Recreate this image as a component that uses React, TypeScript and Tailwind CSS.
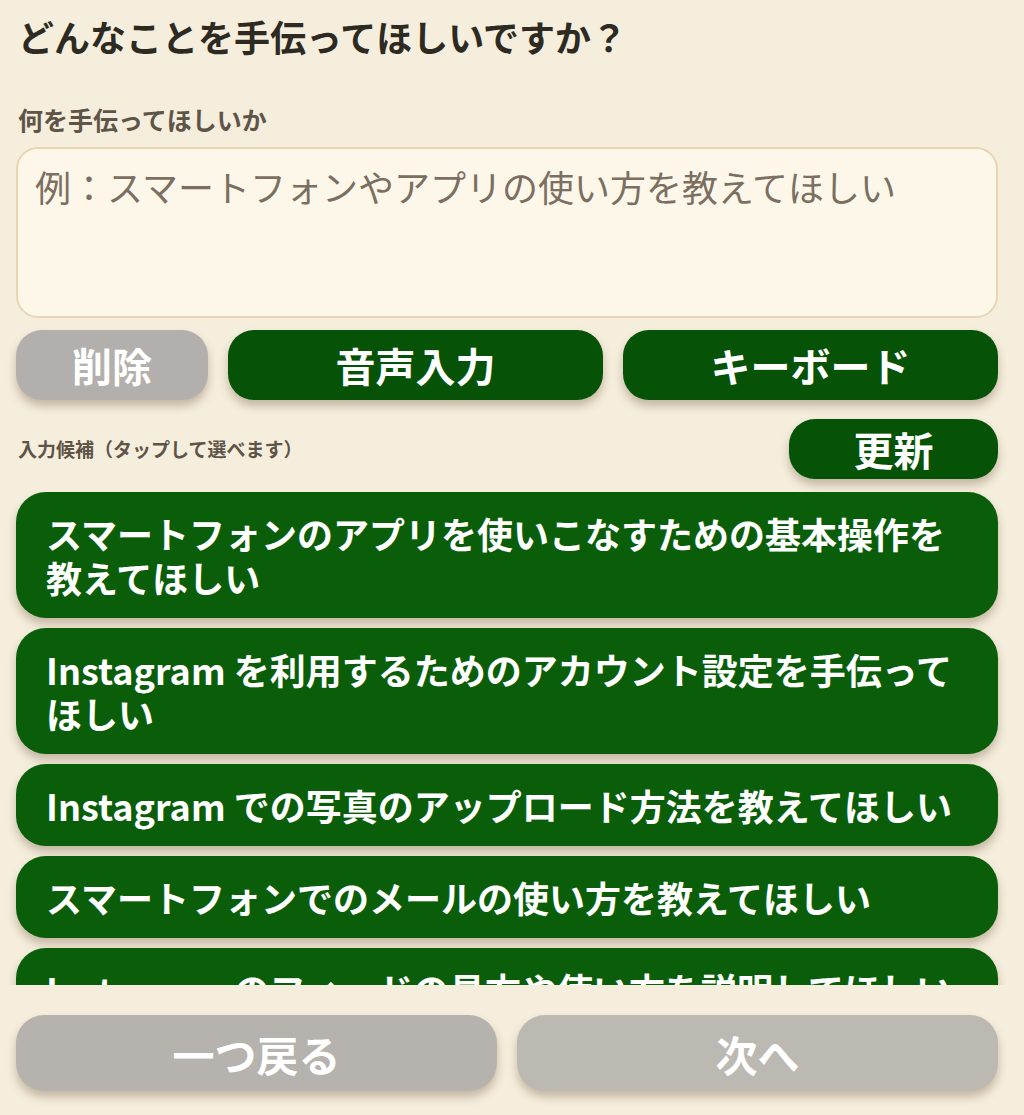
import React from "react";

const SUGGESTIONS = [
  "スマートフォンのアプリを使いこなすための基本操作を教えてほしい",
  "Instagram を利用するためのアカウント設定を手伝ってほしい",
  "Instagram での写真のアップロード方法を教えてほしい",
  "スマートフォンでのメールの使い方を教えてほしい",
  "Instagram のフィードの見方や使い方を説明してほしい",
];

const shadow = "shadow-[0_6px_10px_rgba(60,40,10,0.28)]";

export default function App() {
  return (
    <div className="w-[1024px] h-[1115px] bg-[#f6eedd] pl-4 pr-[26px] flex flex-col overflow-hidden font-['Noto_Sans_CJK_JP','Noto_Sans',sans-serif]">
      <h1 className="pt-[13px] pl-[2px] text-[36px] leading-[46px] font-bold text-[#2d2a22]">
        どんなことを手伝ってほしいですか？
      </h1>

      <p className="mt-[45px] pl-[2px] text-[25px] leading-[30px] font-semibold text-[#5e5447]">
        何を手伝ってほしいか
      </p>

      <div className="mt-[13px] h-[171px] shrink-0 rounded-[22px] border-2 border-[#e8d6b2] bg-[#fdf7ea] px-[17px] pt-[14px]">
        <p className="text-[36px] leading-[46px] text-[#7b6f61]">
          例：スマートフォンやアプリの使い方を教えてほしい
        </p>
      </div>

      <div className="mt-[12px] flex gap-[20px]">
        <button className={`w-[192px] h-[70px] rounded-[26px] bg-[#b3afac] text-white text-[40px] font-bold ${shadow}`}>
          削除
        </button>
        <button className={`flex-1 h-[70px] rounded-[26px] bg-[#065206] text-white text-[40px] font-bold ${shadow}`}>
          音声入力
        </button>
        <button className={`flex-1 h-[70px] rounded-[26px] bg-[#065206] text-white text-[40px] font-bold ${shadow}`}>
          キーボード
        </button>
      </div>

      <div className="mt-[19px] flex items-center justify-between">
        <p className="pl-[2px] text-[19px] font-semibold text-[#5e5447]">
          入力候補（タップして選べます）
        </p>
        <button className={`w-[209px] h-[60px] rounded-[26px] bg-[#065206] text-white text-[40px] font-bold ${shadow}`}>
          更新
        </button>
      </div>

      <div className="mt-[13px] -ml-4 -mr-[26px] pl-4 pr-[26px] h-[493px] shrink-0 overflow-hidden">
        <div className="flex flex-col gap-[10px] pb-4">
          {SUGGESTIONS.map((s) => (
            <button
              key={s}
              className={`text-left rounded-[30px] bg-[#0a5e0a] px-[30px] py-[19px] text-white text-[36px] leading-[44px] font-bold ${shadow}`}
            >
              {s}
            </button>
          ))}
        </div>
      </div>

      <div className="mt-[30px] flex gap-[20px]">
        <button className={`flex-1 h-[76px] rounded-[28px] bg-[#b6b2ad] text-white text-[42px] font-bold ${shadow}`}>
          一つ戻る
        </button>
        <button className={`flex-1 h-[76px] rounded-[28px] bg-[#bcb8b2] text-white text-[42px] font-bold ${shadow}`}>
          次へ
        </button>
      </div>
    </div>
  );
}
